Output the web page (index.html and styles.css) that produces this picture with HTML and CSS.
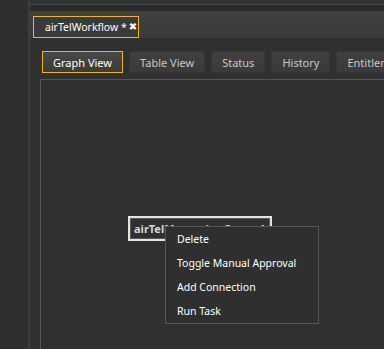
FILE: index.html
```html
<!DOCTYPE html>
<html lang="en">
<head>
    <meta charset="UTF-8">
    <title>airTelWorkflow</title>
    <link rel="stylesheet" href="styles.css">
</head>
<body>
    <div class="app">
        <div class="sidebar"></div>
        <div class="divider"></div>
        <div class="main">
            <div class="topbar"></div>
            <div class="gap"></div>
            <div class="tabstrip">
                <div class="tab">airTelWorkflow *<span class="close">&#10006;</span></div>
            </div>
            <div class="content">
                <div class="views">
                    <button class="view active">Graph View</button>
                    <button class="view">Table View</button>
                    <button class="view">Status</button>
                    <button class="view">History</button>
                    <button class="view">Entitlements</button>
                </div>
                <div class="canvas">
                    <div class="node">airTelMessagingQueue1</div>
                    <ul class="menu">
                        <li>Delete</li>
                        <li>Toggle Manual Approval</li>
                        <li>Add Connection</li>
                        <li>Run Task</li>
                    </ul>
                </div>
            </div>
        </div>
    </div>
</body>
</html>
```

FILE: styles.css
```css
body {
    margin: 0;
    background-color: #2f2f2f;
    font-family: 'Noto Sans', 'DejaVu Sans', sans-serif;
    overflow: hidden;
}

.app {
    display: flex;
    width: 384px;
    height: 349px;
}

.sidebar {
    width: 28px;
    background-color: #2f2f2f;
}

.divider {
    width: 2px;
    background-color: #3e3e3e;
}

.main {
    flex: 1;
    display: flex;
    flex-direction: column;
    min-width: 0;
    overflow: hidden;
}

.topbar {
    height: 4px;
    background-color: #323232;
    border-bottom: 1px solid #474747;
}

.gap {
    height: 6px;
    background-color: #2a2a2a;
}

.tabstrip {
    height: 27px;
    background: linear-gradient(#414141, #393939);
    padding: 5px 0 0 3px;
    box-sizing: border-box;
    display: flex;
}

.tab {
    height: 22px;
    box-sizing: border-box;
    border: 1px solid #f0b41c;
    background-color: #3a3a3a;
    color: #ffffff;
    font-size: 10.5px;
    line-height: 20px;
    padding: 0 2px 0 11px;
    white-space: nowrap;
}

.close {
    font-family: 'DejaVu Sans', sans-serif;
    font-size: 10px;
    margin-left: 2px;
    letter-spacing: -1px;
    vertical-align: 1px;
}

.content {
    flex: 1;
    background-color: #303030;
    padding: 13px 0 0 10px;
    display: flex;
    flex-direction: column;
}

.views {
    display: flex;
    gap: 6px;
    padding-left: 2px;
    white-space: nowrap;
}

.view {
    height: 22px;
    padding: 0 10px;
    border: 1px solid #363636;
    background: linear-gradient(#404040, #3a3a3a);
    color: #c8c8c8;
    font-family: inherit;
    font-size: 11px;
    flex-shrink: 0;
}

.view.active {
    border-color: #f0b41c;
    color: #ffffff;
    background: linear-gradient(#484848, #3b3b3b);
}

.canvas {
    flex: 1;
    margin-top: 6px;
    border-left: 1px solid #555555;
    border-top: 1px solid #555555;
    position: relative;
}

.node {
    position: absolute;
    left: 87px;
    top: 136px;
    height: 25px;
    box-sizing: border-box;
    border: 2px solid #e4e4e4;
    box-shadow: inset 0 0 0 1px #5a5a5a;
    padding: 0 4px;
    color: #d6d6d6;
    font-size: 11px;
    font-weight: bold;
    line-height: 21px;
    white-space: nowrap;
}

.menu {
    position: absolute;
    left: 124px;
    top: 146px;
    width: 154px;
    box-sizing: border-box;
    margin: 0;
    padding: 0;
    list-style: none;
    background-color: #2f2f2f;
    border: 1px solid #565656;
}

.menu li {
    height: 24px;
    line-height: 24px;
    padding-left: 11px;
    color: #ffffff;
    font-size: 10.5px;
}
```
